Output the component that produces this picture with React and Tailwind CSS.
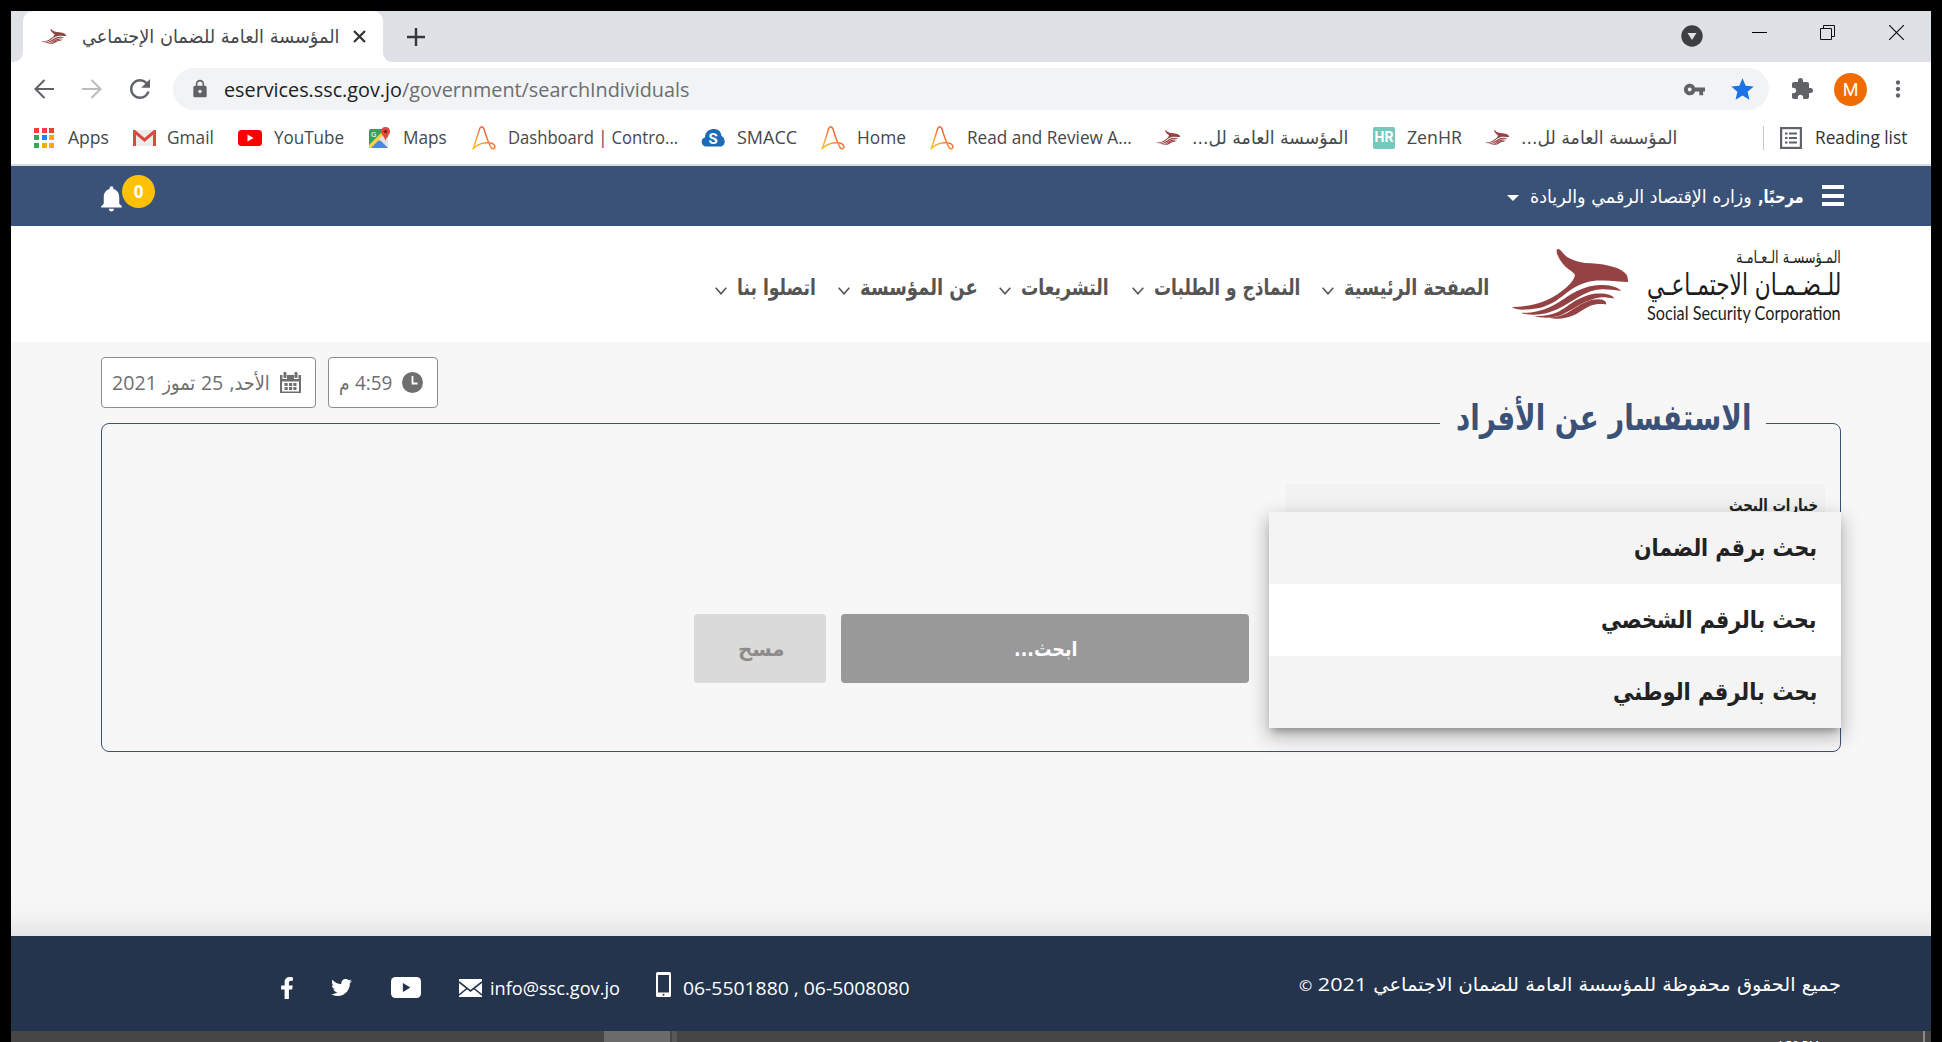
import React, { useLayoutEffect, useRef } from "react";
import { MdArrowBack, MdArrowForward, MdRefresh, MdLock, MdVpnKey, MdStar, MdExtension, MdMoreVert, MdAdd, MdClose, MdNotifications } from "react-icons/md";
import { FaFacebookF, FaTwitter } from "react-icons/fa";

/* A line of text condensed or stretched to the width of its box. */
function Fit({ className = "", rtl = false, children }) {
  const outer = useRef(null);
  const inner = useRef(null);
  useLayoutEffect(() => {
    const fit = () => {
      const w = inner.current.offsetWidth;
      if (w) inner.current.style.transform = `scaleX(${(outer.current.clientWidth + 1) / w})`;
    };
    fit();
    document.fonts?.ready.then(fit);
  }, []);
  return (
    <span ref={outer} dir="ltr" className={`flex shrink-0 items-center ${className}`}>
      <span ref={inner} dir={rtl ? "rtl" : "ltr"} className="inline-block shrink-0 origin-left whitespace-nowrap">{children}</span>
    </span>
  );
}

function Bird({ className }) {
  return (
    <svg viewBox="0 0 116 70" preserveAspectRatio="none" className={className} fill="#944244">
      <path d="M46 0C43.500 0 44 6 51 15C55 20 62 23 63 26C62 33 50 44 35 51C24 56 12 58 0 58C3 60.500 9 61 15 60.500C26 60 32 58 38 55C47 51 52 45 60 40C69 34 79 31.500 88 31.500C98 31 108 33 116 33C116 29 115.500 26 113 24C109 20 104 18.500 98 17C89 14.500 81 14.500 73 14C66 13 60 11 55 8C51 5 49 0 46 0Z" />
      <path d="M9 64C20 64 29 62 38 58C49 53 56 46 65 42C73 38 81 36 88 36C97 36 105 37 109 42C101 41 95 40 88 40.500C79 41 72 45 65 49C55 55 47 60 38 63C29 66 20 67 9 64Z" />
      <path d="M22 67C31 67.500 39 66 46 63C55 58 61 52 69 49C75 46 82 44 88 44.500C95 44.500 101 46 102 49.500C97 49 93 48 88 48.500C82 49 76 52 71 54C62 59 56 63 48 66.500C40 69 31 69.500 22 67Z" />
      <path d="M36 68.500C43 68.500 49 67 55 64C62 60 68 55 75 52.500C79 51 84 50 88 50.500C92 50.500 95 53 94 55.500C89 54.500 83 55 78 57C71 60 67 64 61 66.500C54 69.500 45 71 36 68.500Z" />
    </svg>
  );
}

function Acrobat() {
  return (
    <svg viewBox="0 0 24 24" className="h-6 w-6 shrink-0" fill="none" stroke="url(#ag)" strokeWidth="1.5" strokeLinecap="round">
      <defs><linearGradient id="ag" x1="0" y1="1" x2="0.7" y2="0.3"><stop offset="0" stopColor="#ffc928" /><stop offset="1" stopColor="#f0603a" /></linearGradient></defs>
      <path d="M1 23C4 15 6 8 7.500 3C8.500 0 11 0 12 3C14 10 15.500 15 19 21.500C20.500 24 23.500 22.500 22.800 20C21.500 15.500 8 15 1 23" />
    </svg>
  );
}

function Apps() {
  const c = ["bg-[#ea4335]", "bg-[#ea4335]", "bg-[#ea4335]", "bg-[#34a853]", "bg-[#1a86f0]", "bg-[#fba904]", "bg-[#34a853]", "bg-[#fba904]", "bg-[#fba904]"];
  return <span className="grid h-5 w-5 shrink-0 grid-cols-3 gap-[2.5px]">{c.map((k, i) => <i key={i} className={k} />)}</span>;
}
function Gmail() {
  return (
    <svg viewBox="0 0 23 16" className="h-4 w-[23px] shrink-0">
      <rect width="23" height="16" rx="1.500" fill="#ececec" />
      <path d="M1.500 16V1.500L11.500 10L21.500 1.500V16" fill="none" stroke="#dc4a3f" strokeWidth="3" />
    </svg>
  );
}
function Tube({ className, box, tri }) {
  return <svg viewBox="0 0 24 16" preserveAspectRatio="none" className={className}><rect width="24" height="16" rx="3.500" fill={box} /><path d="M9.500 4.500L15.500 8L9.500 11.500Z" fill={tri} /></svg>;
}
function Maps() {
  return (
    <svg viewBox="0 0 22 22" className="h-[22px] w-[22px] shrink-0">
      <rect y="2" width="19" height="19" rx="1.500" fill="#34a059" />
      <path d="M2 21L12 11L19 19V21Z" fill="#4a86e8" /><path d="M0 18L15 3L19 6L3 21H1.500L0 19.500Z" fill="#fbd14b" />
      <path d="M10 12L19 21V10L14.500 8Z" fill="#e4e4e4" /><path d="M9.500 13.500L17 21H2Z" fill="#4a86e8" />
      <text x="2" y="10" fontSize="8" fill="#fff" fontFamily="Roboto">G</text>
      <path d="M16.500 0C13.500 0 12 2 12 4.500C12 8 15.500 9 16.500 14C17.500 9 21 8 21 4.500C21 2 19.500 0 16.500 0Z" fill="#dd4b3e" /><circle cx="16.500" cy="4.500" r="1.700" fill="#7d2319" />
    </svg>
  );
}
function Smacc() {
  return (
    <svg viewBox="0 0 24 18" className="h-[18px] w-6 shrink-0">
      <path d="M5 17.500C0 17.500-1 9.500 4 8.500C4 2 9 0 13 0C18 0 20 3 20.500 7C25 9 25 17.500 19 17.500Z" fill="#1d6ab5" />
      <text x="7.500" y="15" fontSize="15" fontWeight="bold" fill="#fff" fontFamily="Roboto">S</text>
    </svg>
  );
}
function ReadingIcon() {
  return (
    <svg viewBox="0 0 22 22" className="h-[22px] w-[22px] shrink-0" fill="none" stroke="#5f6368" strokeWidth="2.2">
      <rect x="1.100" y="1.100" width="19.800" height="19.800" /><path d="M5 6.500H7.500M9 6.500H17M5 11H7.500M9 11H17M5 15.500H7.500M9 15.500H17" />
    </svg>
  );
}

const AR = "font-['DejaVu_Sans_Condensed','DejaVu_Sans',sans-serif]";

function NavItem({ label, width, className = "" }) {
  return (
    <div className={`flex items-center ${className}`}>
      <Fit rtl className={width}>{label}</Fit>
      <svg viewBox="0 0 12 8" className="mr-[10px] mt-[7px] h-2 w-3" fill="none" stroke="#555" strokeWidth="1.600"><path d="M.7.800L6 6.800L11.300.800" /></svg>
    </div>
  );
}

export default function App() {
  return (
    <div className="h-[1042px] w-[1942px] overflow-hidden bg-black pl-[11px] pt-[11px] font-['Open_Sans','DejaVu_Sans_Condensed',sans-serif]">
      <div className="flex h-[1031px] w-[1920px] flex-col bg-white">
        {/* tab strip */}
        <div className="flex h-[51px] shrink-0 items-start bg-[#dee1e6]">
          <div className="h-full w-3 bg-white"><div className="h-full rounded-br-[10px] bg-[#dee1e6]" /></div>
          <div className="flex h-full w-[360px] items-center rounded-t-[10px] bg-white pl-[18px]">
            <Bird className="h-[15px] w-[25px]" />
            <Fit rtl className={`ml-4 w-[257px] text-[19px] text-[#45484c] ${AR}`}>المؤسسة العامة للضمان الإجتماعي</Fit>
            <svg viewBox="0 0 13 13" className="ml-[14px] h-[13px] w-[13px]" stroke="#303336" strokeWidth="2.2"><path d="M1 1L12 12M12 1L1 12" /></svg>
          </div>
          <div className="h-full w-[9px] bg-white"><div className="h-full rounded-bl-[10px] bg-[#dee1e6]" /></div>
          <svg viewBox="0 0 18 18" className="ml-[15px] mt-[17px] h-[18px] w-[18px]" stroke="#35383b" strokeWidth="2.400"><path d="M9 0V18M0 9H18" /></svg>
          <div className="ml-auto mr-[27px] flex h-[51px] items-start">
            <svg viewBox="0 0 22 22" className="mr-[49px] mt-[14px] h-[22px] w-[22px]"><circle cx="11" cy="11" r="10.700" fill="#3c4043" /><path d="M6.500 8H15.500L11 15Z" fill="#dee1e6" /></svg>
            <div className="mr-[53px] mt-[21px] h-px w-[15px] bg-black" />
            <svg viewBox="0 0 15 15" className="mr-[54px] mt-[14px] h-[15px] w-[15px]" fill="none" stroke="#111" strokeWidth="1"><path d="M.5 3.500H11.500V14.500H.5ZM3.500 3.500V.5H14.500V11.500H11.500" /></svg>
            <svg viewBox="0 0 15 15" className="mt-[14px] h-[15px] w-[15px]" stroke="#111" strokeWidth="1.200"><path d="M0 0L15 15M15 0L0 15" /></svg>
          </div>
        </div>
        {/* address bar */}
        <div className="flex h-[54px] shrink-0 items-center text-[#5f6368]">
          <svg viewBox="0 0 20 20" className="ml-[23px] h-5 w-5" fill="none" stroke="currentColor" strokeWidth="2.100"><path d="M20 10H1.500M10.500 1L1.500 10L10.500 19" /></svg>
          <svg viewBox="0 0 20 20" className="ml-[28px] h-5 w-5 text-[#babcbe]" fill="none" stroke="currentColor" strokeWidth="2.100"><path d="M0 10H18.500M9.500 1L18.500 10L9.500 19" /></svg>
          <MdRefresh className="ml-[23px] h-[30px] w-[30px]" />
          <div className="ml-[18px] flex h-[42px] w-[1596px] items-center rounded-full bg-[#f1f3f4] pl-[17px]">
            <MdLock className="h-5 w-5" />
            <Fit className="ml-[14px] w-[464px] text-[20.5px] text-[#6a6e72]"><span className="text-[#202124]">eservices.ssc.gov.jo</span>/government/searchIndividuals</Fit>
            <MdVpnKey className="ml-auto h-[23px] w-[23px]" />
            <MdStar className="ml-[23px] mr-[13px] h-[27px] w-[27px] text-[#1a73e8]" />
          </div>
          <MdExtension className="ml-[21px] h-6 w-6" />
          <div className="ml-5 flex h-[33px] w-[33px] items-center justify-center rounded-full bg-[#ef6c00] font-['Roboto'] text-[18px] text-white">M</div>
          <MdMoreVert className="ml-[18px] h-[26px] w-[26px]" />
        </div>
        {/* bookmarks */}
        <div className="flex h-12 shrink-0 items-center pb-[6px] pt-px text-[18px] text-[#45484c]">
          <span className="w-[23px]" /><Apps /><Fit className="ml-[14px] w-[40px]">Apps</Fit>
          <span className="w-[25px]" /><Gmail /><Fit className="ml-[11px] w-[46px]">Gmail</Fit>
          <span className="w-[25px]" /><Tube className="h-4 w-6" box="#f00" tri="#fff" /><Fit className="ml-3 w-[69px]">YouTube</Fit>
          <span className="w-[26px]" /><Maps /><Fit className="ml-[12px] w-[43px]">Maps</Fit>
          <span className="w-[26px]" /><Acrobat /><Fit className="ml-[12px] w-[169px]">Dashboard | Contro...</Fit>
          <span className="w-[24px]" /><Smacc /><Fit className="ml-3 w-[59px]">SMACC</Fit>
          <span className="w-[25px]" /><Acrobat /><Fit className="ml-[12px] w-[48px]">Home</Fit>
          <span className="w-[25px]" /><Acrobat /><Fit className="ml-[13px] w-[164px]">Read and Review A...</Fit>
          <span className="w-[25px]" /><Bird className="h-[15px] w-6" /><Fit rtl className={`ml-3 w-[155px] text-[18px] ${AR}`}>المؤسسة العامة لل...</Fit>
          <span className="w-[26px]" />
          <div className="flex h-[22px] w-[22px] items-center justify-center rounded-[2px] bg-[#74c9bb] font-['Roboto'] text-[14px] font-bold text-white">HR</div>
          <Fit className="ml-[12px] w-[54px]">ZenHR</Fit>
          <span className="w-[24px]" /><Bird className="h-[15px] w-6" /><Fit rtl className={`ml-3 w-[155px] text-[18px] ${AR}`}>المؤسسة العامة لل...</Fit>
          <span className="ml-[87px] h-6 w-px bg-[#c6c8ca]" /><span className="w-[16px]" /><ReadingIcon /><Fit className="ml-[13px] w-[91px] text-[#303336]">Reading list</Fit>
        </div>
        <div className="h-[2px] shrink-0 bg-[#d8dbe1]" />
        {/* user bar */}
        <div className="flex h-[60px] shrink-0 items-start bg-[#3a5178] text-white">
          <MdNotifications className="ml-[85px] mt-[17px] h-[31px] w-[31px]" />
          <div className="-ml-[5px] mt-[9px] flex h-[33px] w-[33px] items-center justify-center rounded-full bg-[#ffc107] text-[17px] font-bold">0</div>
          <div className={`ml-auto mr-[87px] flex h-[60px] items-center ${AR}`}>
            <svg viewBox="0 0 12 6" className="mr-[11px] mt-[3px] h-[6px] w-3" fill="white"><path d="M0 0H12L6 6Z" /></svg>
            <Fit rtl className="mr-[7px] w-[221px] text-[18px]">وزاره الإقتصاد الرقمي والريادة</Fit>
            <Fit rtl className="mr-[19px] w-[45px] text-[18px] font-bold">مرحبًا,</Fit>
            <div className="mb-px flex w-[22px] flex-col gap-[4.5px]"><i className="h-1 bg-white" /><i className="h-1 bg-white" /><i className="h-1 bg-white" /></div>
          </div>
        </div>
        {/* site header */}
        <header dir="rtl" className="flex h-[116px] shrink-0 items-start pr-[91px]">
          <div className={`mt-[22px] flex w-[193px] flex-col items-start text-[#1c1c1c] ${AR}`}>
            <Fit rtl className="h-[20px] w-[104px] text-[17px]">المـؤسسـة الـعـامـة</Fit>
            <Fit rtl className="h-[32px] w-[193px] text-[30px]">للـضـمـان الاجتمـاعـي</Fit>
            <Fit className="h-[24px] w-[193px] font-['Lato'] text-[20px]">Social Security Corporation</Fit>
          </div>
          <Bird className="mr-[19px] mt-[23px] h-[70px] w-[116px]" />
          <nav className={`mr-[24px] mt-[45px] flex h-[32px] items-center text-[22px] font-bold text-[#555] ${AR}`}>
            <NavItem label="الصفحة الرئيسية" width="w-[144px]" />
            <NavItem label="النماذج و الطلبات" width="w-[145px]" className="mr-[23px]" />
            <NavItem label="التشريعات" width="w-[87px]" className="mr-[24px]" />
            <NavItem label="عن المؤسسة" width="w-[117px]" className="mr-[22px]" />
            <NavItem label="اتصلوا بنا" width="w-[78px]" className="mr-[23px]" />
          </nav>
        </header>
        {/* content */}
        <main className="flex h-[594px] shrink-0 flex-col bg-[#f7f7f7] px-[90px] pt-[15px]">
          <div className={`flex h-[51px] shrink-0 gap-3 text-[20px] text-[#6f6f6f] ${AR}`}>
            <div className="flex w-[215px] items-center rounded-[4px] border border-[#8c8c8c] bg-white pl-[10px]">
              <Fit rtl className="w-[157px]">الأحد, <span className="font-['Open_Sans'] text-[20px]">25</span> تموز <span className="font-['Open_Sans'] text-[20px]">2021</span></Fit>
              <svg viewBox="0 0 21 21" className="ml-[11px] h-[21px] w-[21px]" fill="#6f6f6f"><path d="M0 3H2.500V7H7V3H14V7H18.500V3H21V21H0Z" /><rect x="3.500" width="3" height="6" rx="1" /><rect x="14.500" width="3" height="6" rx="1" /><rect x="2" y="9.500" width="17" height="10" fill="#fff" /><path d="M4.500 11H7.700V13.900H4.500ZM9 11H12.200V13.900H9ZM13.400 11H16.500V13.900H13.400ZM4.500 15.100H7.700V18H4.500ZM9 15.100H12.200V18H9ZM13.400 15.100H16.500V18H13.400Z" /></svg>
            </div>
            <div className="flex w-[110px] items-center rounded-[4px] border border-[#8c8c8c] bg-white pl-[10px]">
              <Fit rtl className="w-[52px]"><span className="font-['Open_Sans'] text-[20px]">4:59</span> م</Fit>
              <svg viewBox="0 0 21 21" className="ml-[11px] h-[21px] w-[21px]"><circle cx="10.500" cy="10.500" r="10.500" fill="#6f6f6f" /><path d="M10.500 4V11.500H15.500" fill="none" stroke="#fff" strokeWidth="1.800" /></svg>
            </div>
          </div>
          <section dir="rtl" className="relative mt-[15px] h-[329px] w-[1740px] shrink-0 rounded-[8px] border border-[#3a5178]">
            <h1 className={`absolute -top-[28px] right-[74px] flex h-[44px] w-[326px] justify-center bg-[#f7f7f7] text-[36px] font-bold text-[#3a5178] ${AR}`}><Fit rtl className="w-[294px]">الاستفسار عن الأفراد</Fit></h1>
            <div className="mr-[15px] mt-[60px] h-[70px] w-[539px] bg-[#f2f2f2] pr-2 pt-[7px]">
              <Fit rtl className={`h-[30px] w-[88px] text-[17px] font-bold text-[#222] ${AR}`}>خيارات البحث</Fit>
            </div>
            <div className={`mr-[591px] mt-[60px] flex h-[69px] gap-[15px] text-[20px] font-bold ${AR}`}>
              <div className="flex w-[408px] items-center justify-center rounded-[4px] bg-[#999] text-white"><Fit rtl className="w-[62px]">ابحث...</Fit></div>
              <div className="flex w-[132px] items-center justify-center rounded-[4px] bg-[#dadada] text-[#8b8b8b]"><Fit rtl className="w-[45px]">مسح</Fit></div>
            </div>
            <div className={`absolute -right-px top-[88px] w-[572px] bg-white text-[24px] font-bold text-[#222] shadow-[0_6px_7px_-3px_rgba(0,0,0,0.25),0_7px_18px_2px_rgba(0,0,0,0.26)] ${AR}`}>
              <div className="flex h-[72px] items-center bg-[#f4f4f4] pr-[25px]"><Fit rtl className="w-[182px]">بحث برقم الضمان</Fit></div>
              <div className="flex h-[72px] items-center pr-[25px]"><Fit rtl className="w-[215px]">بحث بالرقم الشخصي</Fit></div>
              <div className="flex h-[72px] items-center bg-[#f4f4f4] pr-[25px]"><Fit rtl className="w-[203px]">بحث بالرقم الوطني</Fit></div>
            </div>
          </section>
          <div className="-mx-[90px] mt-auto h-10 shrink-0 bg-linear-to-b from-[#f7f7f7] via-[#f3f3f3] to-[#e4e4e4]" />
        </main>
        {/* footer */}
        <footer className="flex h-[95px] shrink-0 items-center bg-[#24344d] pt-[8px] text-[19px] text-white">
          <FaFacebookF className="ml-[265px] h-[22px] w-[22px]" />
          <FaTwitter className="ml-[33px] h-[21px] w-[21px]" />
          <Tube className="ml-[39px] h-[21px] w-[30px]" box="#fff" tri="#24344d" />
          <svg viewBox="0 0 23 18" className="ml-[38px] h-[18px] w-[23px]"><rect width="23" height="18" fill="#fff" /><path d="M0 3L11.500 12L23 3M0 16L8 9.500M23 16L15 9.500" fill="none" stroke="#24344d" strokeWidth="1.600" /></svg>
          <Fit className="ml-2 mt-[2px] w-[129px]">info@ssc.gov.jo</Fit>
          <svg viewBox="0 0 15 25" className="mb-[6px] ml-[37px] h-[25px] w-[15px]"><rect width="15" height="25" rx="1.500" fill="#fff" /><path d="M2 3H13V20.500H2Z" fill="#24344d" /><circle cx="7.500" cy="22.700" r="1" fill="#24344d" /></svg>
          <Fit className="ml-3 mt-[2px] w-[226px]">06-5501880 , 06-5008080</Fit>
          <Fit rtl className={`mb-[6px] ml-auto mr-[91px] w-[541px] text-[19px] ${AR}`}>جميع الحقوق محفوظة للمؤسسة العامة للضمان الاجتماعي <span className="font-['Open_Sans']">2021 <span className="text-[14px]">©</span></span></Fit>
        </footer>
        {/* taskbar */}
        <div className="flex h-[11px] shrink-0 overflow-hidden bg-[#464646]">
          <i className="ml-[593px] w-[66px] bg-[#6b6b6b]" /><i className="ml-[2px] w-[5px] bg-[#585858]" />
          <Fit className="ml-[1099px] mt-[4px] h-5 w-[42px] text-[15px] text-white">4:59 PM</Fit>
          <i className="ml-auto mr-[6px] w-[2px] bg-[#8b8b8b]" />
        </div>
      </div>
    </div>
  );
}
